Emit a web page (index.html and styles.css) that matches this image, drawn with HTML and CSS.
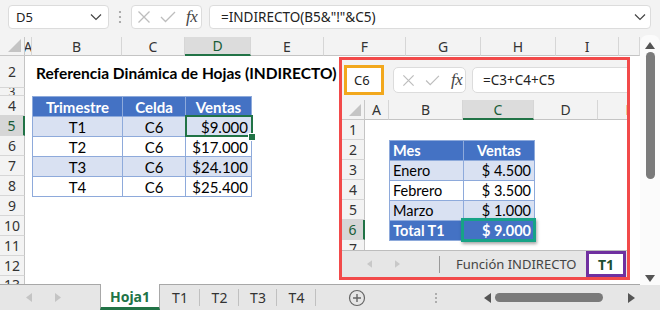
FILE: index.html
```html
<!DOCTYPE html>
<html lang="es">
<head>
  <meta charset="UTF-8" />
  <title>Referencia Dinámica de Hojas</title>
  <link rel="stylesheet" href="styles.css">
</head>
<body>
  <div class="app">
    <div class="fbar">
      <div class="namebox">
        <span>D5</span>
        <svg width="12" height="8" viewBox="0 0 12 8"><path d="M1 1.5l5 5 5-5" fill="none" stroke="#444" stroke-width="1.2"/></svg>
      </div>
      <div class="dots">
        <svg width="4" height="14" viewBox="0 0 4 14"><circle cx="2" cy="2" r="1.1" fill="#9a9a9a"/><circle cx="2" cy="7" r="1.1" fill="#9a9a9a"/><circle cx="2" cy="12" r="1.1" fill="#9a9a9a"/></svg>
      </div>
      <div class="fxbox">
        <svg class="ico-x" width="14" height="14" viewBox="0 0 14 14"><path d="M1.5 1.5l11 11M12.5 1.5l-11 11" stroke="#bdbdbd" stroke-width="1.3"/></svg>
        <svg class="ico-ok" width="16" height="12" viewBox="0 0 16 12"><path d="M1 6l4.5 4.5L15 1" fill="none" stroke="#bdbdbd" stroke-width="1.3"/></svg>
        <i class="fx">fx</i>
      </div>
      <div class="formula">
        <span>=INDIRECTO(B5&amp;"!"&amp;C5)</span>
        <svg width="12" height="8" viewBox="0 0 12 8"><path d="M1 1.5l5 5 5-5" fill="none" stroke="#444" stroke-width="1.2"/></svg>
      </div>
    </div>

    <div class="main">
      <div class="sheet">
        <div class="corner"><svg width="13" height="13" viewBox="0 0 13 13"><path d="M13 0V13H0z" fill="#c4c4c4"/></svg></div>
        <div class="ch">A</div>
        <div class="ch">B</div>
        <div class="ch">C</div>
        <div class="ch sel">D</div>
        <div class="ch">E</div>
        <div class="ch">F</div>
        <div class="ch">G</div>
        <div class="ch">H</div>
        <div class="ch">I</div>
        <div class="ch"></div>

        <div class="rh">2</div>
        <div class="rh thin">3</div>
        <div class="rh">4</div>
        <div class="rh sel">5</div>
        <div class="rh">6</div>
        <div class="rh">7</div>
        <div class="rh">8</div>
        <div class="rh">9</div>
        <div class="rh">10</div>
        <div class="rh">11</div>
        <div class="rh">12</div>
        <div class="rh cut">13</div>

        <div class="title">Referencia Dinámica de Hojas (INDIRECTO)</div>

        <div class="tblwrap">
          <table class="tbl">
            <colgroup><col class="w-b"><col class="w-c"><col class="w-d"></colgroup>
            <tr class="head"><td>Trimestre</td><td>Celda</td><td>Ventas</td></tr>
            <tr class="band"><td class="c">T1</td><td class="c">C6</td><td class="r sel">$9.000</td></tr>
            <tr><td class="c">T2</td><td class="c">C6</td><td class="r">$17.000</td></tr>
            <tr class="band"><td class="c">T3</td><td class="c">C6</td><td class="r">$24.100</td></tr>
            <tr><td class="c">T4</td><td class="c">C6</td><td class="r">$25.400</td></tr>
          </table>
        </div>
      </div>

      <div class="vscroll">
        <svg class="arr-up" width="10" height="7" viewBox="0 0 10 7"><path d="M5 0l5 7H0z" fill="#555"/></svg>
        <div class="vthumb"></div>
        <svg class="arr-down" width="10" height="7" viewBox="0 0 10 7"><path d="M0 0h10L5 7z" fill="#555"/></svg>
      </div>
    </div>

    <div class="tabs">
      <div class="tabnav">
        <svg width="6" height="9" viewBox="0 0 6 9"><path d="M6 0v9L0 4.5z" fill="#c4c4c4"/></svg>
        <svg width="6" height="9" viewBox="0 0 6 9"><path d="M0 0v9l6-4.5z" fill="#c4c4c4"/></svg>
      </div>
      <div class="tab active">Hoja1</div>
      <div class="tab t1">T1</div>
      <div class="tab t2">T2</div>
      <div class="tab t3">T3</div>
      <div class="tab t4">T4</div>
      <div class="addsheet">
        <svg width="18" height="18" viewBox="0 0 18 18"><circle cx="9" cy="9" r="7.5" fill="none" stroke="#666" stroke-width="1.2"/><path d="M9 5v8M5 9h8" stroke="#666" stroke-width="1.4"/></svg>
      </div>
      <div class="hsplit">
        <svg width="4" height="12" viewBox="0 0 4 12"><circle cx="2" cy="2" r="1" fill="#9a9a9a"/><circle cx="2" cy="6" r="1" fill="#9a9a9a"/><circle cx="2" cy="10" r="1" fill="#9a9a9a"/></svg>
      </div>
      <div class="hscroll">
        <svg width="7" height="10" viewBox="0 0 7 10"><path d="M7 0v10L0 5z" fill="#555"/></svg>
        <div class="hthumb"></div>
        <svg width="7" height="10" viewBox="0 0 7 10"><path d="M0 0v10l7-5z" fill="#555"/></svg>
      </div>
    </div>

    <!-- picture of the T1 sheet pasted over the grid -->
    <div class="pic">
      <div class="pbar">
        <div class="pname"><span>C6</span></div>
        <div class="fxbox small">
          <svg class="ico-x" width="13" height="13" viewBox="0 0 14 14"><path d="M1.5 1.5l11 11M12.5 1.5l-11 11" stroke="#bdbdbd" stroke-width="1.3"/></svg>
          <svg class="ico-ok" width="15" height="11" viewBox="0 0 16 12"><path d="M1 6l4.5 4.5L15 1" fill="none" stroke="#bdbdbd" stroke-width="1.3"/></svg>
          <i class="fx">fx</i>
        </div>
        <div class="pformula">=C3+C4+C5</div>
      </div>

      <div class="psheet">
        <div class="corner"><svg width="12" height="12" viewBox="0 0 13 13"><path d="M13 0V13H0z" fill="#c4c4c4"/></svg></div>
        <div class="ch">A</div>
        <div class="ch">B</div>
        <div class="ch sel">C</div>
        <div class="ch">D</div>
        <div class="ch">E</div>

        <div class="rh">1</div>
        <div class="rh">2</div>
        <div class="rh">3</div>
        <div class="rh">4</div>
        <div class="rh">5</div>
        <div class="rh sel">6</div>
        <div class="rh cut">7</div>

        <div class="ptblwrap">
          <table class="tbl ptbl">
            <colgroup><col class="w-pb"><col class="w-pc"></colgroup>
            <tr class="head"><td>Mes</td><td class="c">Ventas</td></tr>
            <tr class="band"><td>Enero</td><td class="r">$ 4.500</td></tr>
            <tr><td>Febrero</td><td class="r">$ 3.500</td></tr>
            <tr class="band"><td>Marzo</td><td class="r">$ 1.000</td></tr>
            <tr class="total"><td>Total T1</td><td class="r psel">$ 9.000</td></tr>
          </table>
        </div>
      </div>

      <div class="ptabs">
        <div class="pnav">
          <svg width="5" height="8" viewBox="0 0 6 9"><path d="M6 0v9L0 4.5z" fill="#c8c8c8"/></svg>
          <svg width="5" height="8" viewBox="0 0 6 9"><path d="M0 0v9l6-4.5z" fill="#c8c8c8"/></svg>
        </div>
        <div class="ptab">Función INDIRECTO</div>
        <div class="ptab cur">T1</div>
      </div>
    </div>
  </div>
</body>
</html>
```

FILE: styles.css
```css
* {
  box-sizing: border-box;
}

body {
  margin: 0;
  font-family: 'Noto Sans', sans-serif;
  color: #222;
}

.app {
  position: relative;
  width: 660px;
  height: 310px;
  overflow: hidden;
  background: #f3f3f3;
}

/* formula bar */
.fbar {
  height: 37px;
  display: flex;
  align-items: flex-start;
  padding: 5px 9px 0 8px;
}

.namebox {
  width: 101px;
  height: 24px;
  background: #fff;
  border: 1px solid #dcdcdc;
  border-radius: 4px;
  display: flex;
  align-items: center;
  justify-content: space-between;
  padding: 0 6px 0 7px;
  font-size: 13px;
}

.dots {
  width: 22px;
  height: 24px;
  display: flex;
  align-items: center;
  justify-content: center;
}

.fxbox {
  width: 71px;
  height: 24px;
  background: #fff;
  border: 1px solid #dcdcdc;
  border-radius: 4px;
  display: flex;
  align-items: center;
  padding-left: 5px;
}

.ico-x {
  margin-right: 9px;
}

.ico-ok {
  margin-right: 10px;
}

.fx {
  font-family: 'Liberation Serif', serif;
  font-size: 17px;
  color: #444;
  letter-spacing: -0.5px;
}

.formula {
  flex: 1;
  margin-left: 7px;
  height: 24px;
  background: #fff;
  border: 1px solid #dcdcdc;
  border-radius: 4px;
  display: flex;
  align-items: center;
  justify-content: space-between;
  padding: 0 4px 0 11px;
  font-size: 13.5px;
}

/* main grid */
.main {
  display: flex;
  height: 247px;
}

.sheet {
  flex: 1;
  display: grid;
  grid-template-columns: 25px 7px 90px 63px 66px 73px 82px 75px 75px 63px 1fr;
  grid-template-rows: 19px 32px 8px repeat(9, 20px) 8px;
  background: #fff;
}

.corner {
  background: #f3f3f3;
  border-right: 1px solid #c8c8c8;
  border-bottom: 1px solid #c8c8c8;
  display: flex;
  align-items: flex-end;
  justify-content: flex-end;
  padding: 0 3px 3px 0;
}

.ch {
  background: #f3f3f3;
  border-right: 1px solid #d6d6d6;
  border-bottom: 1px solid #c4c4c4;
  display: flex;
  align-items: center;
  justify-content: center;
  overflow: hidden;
  font-size: 14px;
  color: #333;
}

.ch.sel {
  background: #dcdcdc;
  border-bottom: 2px solid #217346;
  color: #185c37;
}

.rh {
  grid-column: 1;
  background: #f3f3f3;
  border-right: 1px solid #c4c4c4;
  border-bottom: 1px solid #d6d6d6;
  display: flex;
  align-items: center;
  justify-content: center;
  overflow: hidden;
  font-size: 14px;
  color: #333;
}

.rh.thin {
  font-size: 12px;
  line-height: 8px;
}

.rh.sel {
  background: #d6d6d6;
  border-right: 2px solid #217346;
  color: #185c37;
}

.rh.cut {
  align-items: flex-start;
  padding-top: 2px;
  border-bottom: none;
  line-height: 1;
}

.title {
  grid-column: 3 / 11;
  grid-row: 2;
  display: flex;
  align-items: center;
  padding: 2px 0 0 4px;
  font-family: 'Lato', sans-serif;
  font-weight: bold;
  font-size: 15.5px;
  color: #000;
  white-space: nowrap;
}

.tblwrap {
  grid-column: 3 / 6;
  grid-row: 4 / 9;
}

.tbl {
  width: 100%;
  height: 100%;
  border-collapse: collapse;
  table-layout: fixed;
  font-family: 'Lato', sans-serif;
  font-size: 15px;
  color: #000;
}

.tbl td {
  border: 1px solid #8eaadb;
  padding: 0 3px;
  height: 20px;
  white-space: nowrap;
}

.w-b { width: 90px; }
.w-c { width: 63px; }
.w-d { width: 66px; }

.tbl .head td {
  background: #4472c4;
  color: #fff;
  font-weight: bold;
  text-align: center;
}

.tbl .band td {
  background: #d9e1f2;
}

.tbl .c {
  text-align: center;
}

.tbl .r {
  text-align: right;
}

.tbl td.sel {
  position: relative;
}

.tbl td.sel::after {
  content: "";
  position: absolute;
  left: -1px;
  top: -2px;
  right: -2px;
  bottom: -1px;
  border: 2px solid #217346;
}

.tbl td.sel::before {
  content: "";
  position: absolute;
  right: -5px;
  bottom: -5px;
  width: 6px;
  height: 6px;
  background: #217346;
  border: 1px solid #fff;
  z-index: 1;
}

/* vertical scrollbar */
.vscroll {
  width: 20px;
  height: 250px;
  margin-top: -2px;
  background: #fbfbfb;
  border-radius: 8px 8px 0 0;
  display: flex;
  flex-direction: column;
  align-items: center;
  padding-top: 7px;
}

.vthumb {
  width: 9px;
  height: 127px;
  margin-top: 3px;
  background: #7a7a7a;
  border-radius: 5px;
}

.arr-down {
  margin-top: auto;
  margin-bottom: 3px;
}

/* sheet tabs */
.tabs {
  height: 26px;
  display: flex;
  border-top: 1px solid #a8a8a8;
  background: #e6e6e6;
}

.tabnav {
  width: 100px;
  display: flex;
  align-items: center;
  padding-left: 26px;
  gap: 23px;
}

.tab {
  display: flex;
  align-items: center;
  justify-content: center;
  font-size: 14px;
  color: #333;
  position: relative;
}

.tab::after {
  content: "";
  position: absolute;
  right: 0;
  top: 4px;
  bottom: 4px;
  border-right: 1px solid #c0c0c0;
}

.tab.active {
  width: 60px;
  margin-top: -1px;
  background: #fff;
  border-left: 1px solid #a8a8a8;
  border-right: 1px solid #a8a8a8;
  border-bottom: 3px solid #217346;
  font-weight: bold;
  color: #217346;
  padding-top: 2px;
}

.tab.active::after {
  display: none;
}

.t1 { width: 40px; }
.t2 { width: 39px; }
.t3 { width: 38px; }
.t4 { width: 39px; }

.addsheet {
  width: 82px;
  display: flex;
  align-items: center;
  justify-content: center;
}

.hsplit {
  width: 75px;
  display: flex;
  align-items: center;
  justify-content: center;
}

.hscroll {
  flex: 1;
  display: flex;
  align-items: center;
  padding: 0 25px 0 11px;
}

.hthumb {
  width: 108px;
  height: 9px;
  margin-left: 4px;
  background: #7a7a7a;
  border-radius: 5px;
}

.hscroll svg:last-child {
  margin-left: auto;
}

/* pasted picture */
.pic {
  position: absolute;
  left: 339px;
  top: 57px;
  width: 291px;
  height: 223px;
  border: 3px solid #f24a4a;
  background: #f3f3f3;
  display: flex;
  flex-direction: column;
  overflow: hidden;
}

.pbar {
  height: 40px;
  flex: none;
  display: flex;
  align-items: flex-start;
  padding-left: 2px;
}

.pname {
  width: 40px;
  height: 30px;
  margin-top: 5px;
  border: 3px solid #f2a81d;
  background: #fff;
  display: flex;
  align-items: center;
  padding-left: 7px;
  font-size: 13px;
}

.fxbox.small {
  width: 73px;
  height: 26px;
  margin: 7px 0 0 9px;
  padding-left: 8px;
  border-radius: 5px;
}

.fxbox.small .ico-x {
  margin-right: 10px;
}

.fxbox.small .ico-ok {
  margin-right: 11px;
}

.pformula {
  flex: 1;
  height: 26px;
  margin: 7px -10px 0 6px;
  background: #fff;
  border: 1px solid #dcdcdc;
  border-radius: 5px;
  display: flex;
  align-items: center;
  padding-left: 10px;
  font-size: 13.5px;
}

.psheet {
  height: 150px;
  flex: none;
  display: grid;
  grid-template-columns: 23px 24px 74px 71px 64px 64px;
  grid-template-rows: repeat(7, 20px) 10px;
  background: #fff;
}

.ptblwrap {
  grid-column: 3 / 5;
  grid-row: 3 / 8;
}

.ptbl {
  font-size: 14.5px;
}

.w-pb { width: 74px; }
.w-pc { width: 71px; }

.ptbl .head td:first-child {
  text-align: left;
}

.ptbl .total td {
  background: #4472c4;
  color: #fff;
  font-weight: bold;
}

.ptbl td.psel {
  position: relative;
}

.ptbl td.psel::after {
  content: "";
  position: absolute;
  left: -3px;
  top: -3px;
  right: -2px;
  bottom: -2px;
  border: 3px solid #17a386;
  box-shadow: 1px 2px 3px rgba(0, 0, 0, 0.35);
}

.ptabs {
  flex: 1;
  display: flex;
  border-top: 1px solid #bdbdbd;
  background: #e6e6e6;
}

.pnav {
  width: 98px;
  display: flex;
  align-items: center;
  padding-left: 25px;
  gap: 23px;
  position: relative;
}

.pnav::after {
  content: "";
  position: absolute;
  right: 0;
  top: 5px;
  bottom: 4px;
  border-right: 1px solid #999;
}

.ptab {
  display: flex;
  align-items: center;
  font-size: 13px;
  color: #444;
  padding-left: 16px;
  width: 146px;
}

.ptab.cur {
  width: 40px;
  padding: 0;
  justify-content: center;
  background: #fff;
  border: 3px solid #7030a0;
  font-weight: bold;
  font-size: 14px;
  color: #1d4f31;
}
```
